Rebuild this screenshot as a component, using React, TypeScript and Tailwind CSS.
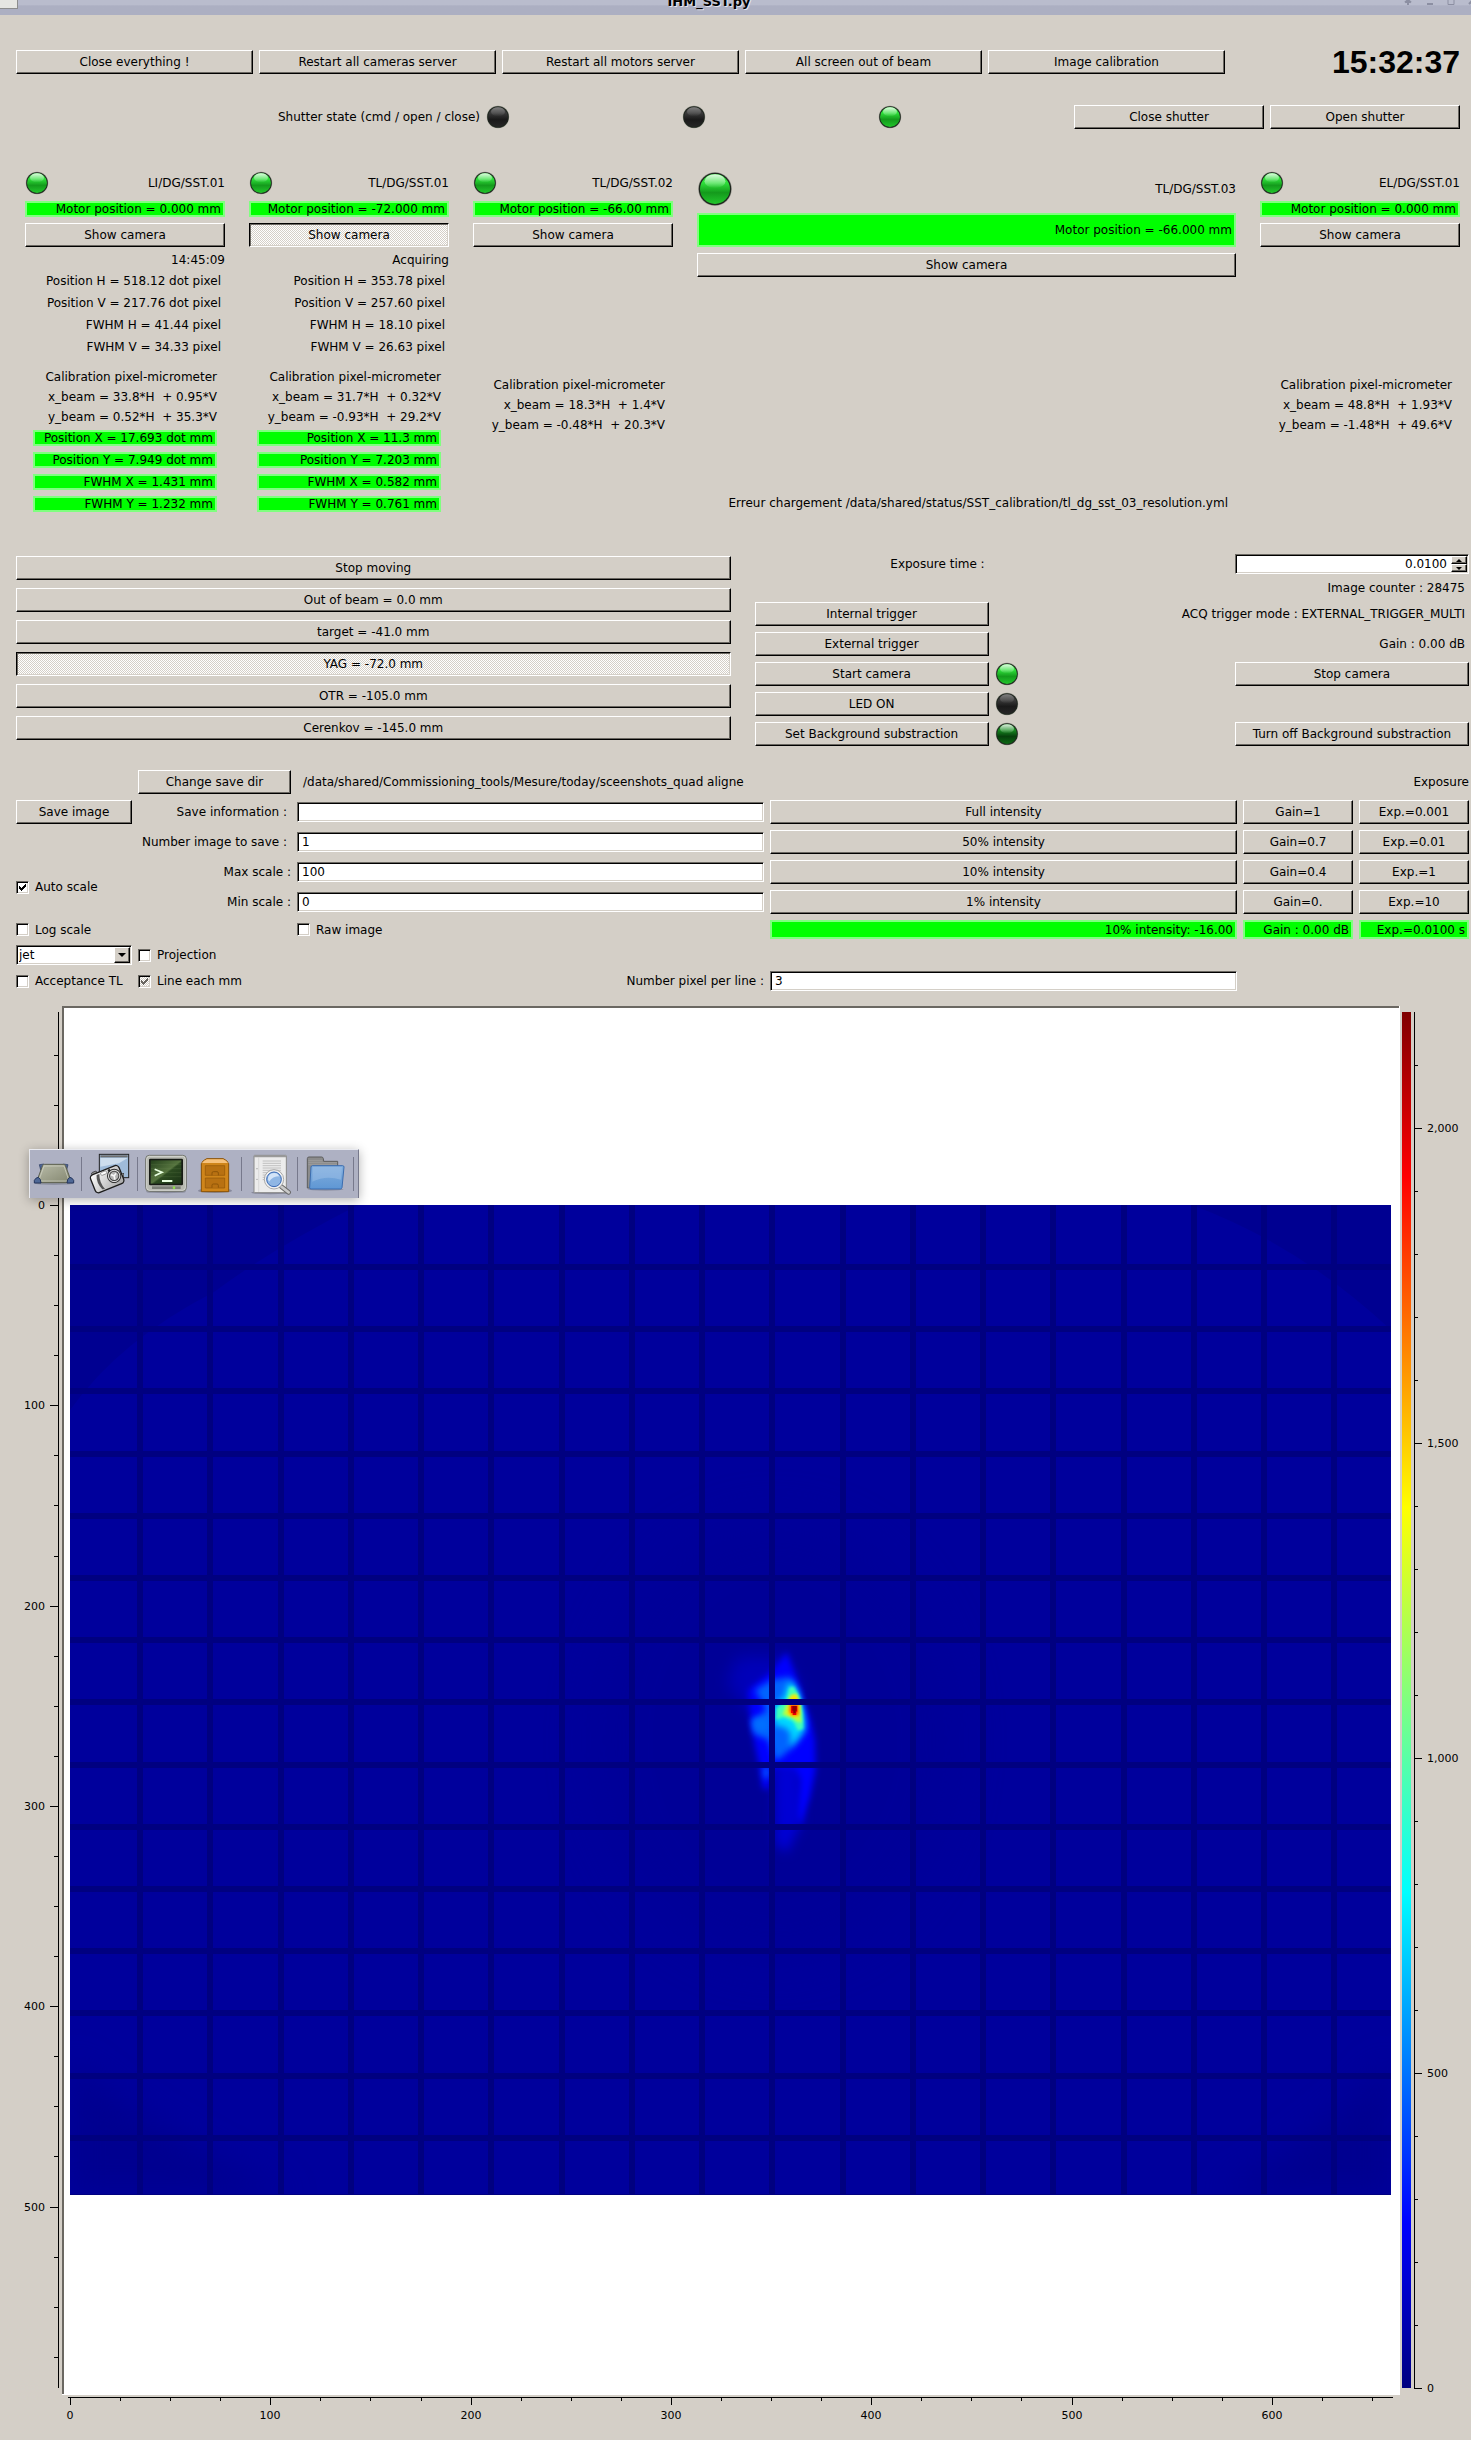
import { useState, type ReactNode } from "react"
import clsx from "clsx"

const raised =
  "border border-t-white border-l-white border-r-black border-b-black shadow-[inset_-1px_-1px_0_#6b6862] bg-[#d4cfc7]"
const pressed =
  "border border-t-black border-l-black border-r-white border-b-white shadow-[inset_1px_1px_0_#6b6862,inset_-1px_-1px_0_#d4cfc7] bg-[repeating-conic-gradient(#fff_0_25%,#d4cfc7_0_50%)] bg-[length:2px_2px]"
const sunken =
  "border border-t-[#6b6862] border-l-[#6b6862] border-r-white border-b-white shadow-[inset_1px_1px_0_#000,inset_-1px_-1px_0_#d4cfc7]"

function Button({
  children,
  active,
  className,
}: {
  children: ReactNode
  active?: boolean
  className?: string
}) {
  return (
    <button
      type="button"
      className={clsx("h-6 w-full leading-none", active ? pressed : raised, className)}
    >
      {children}
    </button>
  )
}

type LedColor = "on" | "off" | "dim"

const ledStops: Record<LedColor, string[]> = {
  on: ["#2ee03a", "#149a1c", "#22c62c"],
  off: ["#3a3a3a", "#1a1a1a", "#262626"],
  dim: ["#168a20", "#06400c", "#0c6a14"],
}

function Led({ color = "on", large }: { color?: LedColor; large?: boolean }) {
  const [top, mid, low] = ledStops[color]
  return (
    <svg viewBox="0 0 24 24" className={large ? "size-9 shrink-0" : "size-6 shrink-0"}>
      <defs>
        <linearGradient id={`body-${color}`} x1="0" y1="0" x2="0" y2="1">
          <stop offset="0.3" stopColor={top} />
          <stop offset="0.62" stopColor={mid} />
          <stop offset="1" stopColor={low} />
        </linearGradient>
        <linearGradient id={`shine-${color}`} x1="0" y1="0" x2="0" y2="1">
          <stop offset="0" stopColor="#fff" stopOpacity={color === "off" ? 0.35 : 0.85} />
          <stop offset="1" stopColor="#fff" stopOpacity="0" />
        </linearGradient>
      </defs>
      <circle cx="12" cy="12" r="11.2" fill="#1d251d" opacity="0.35" />
      <circle cx="12" cy="12" r="10.8" fill="#1d251d" />
      <circle cx="12" cy="12" r="10" fill={`url(#body-${color})`} />
      <ellipse cx="12" cy="6.8" rx="7" ry="4.6" fill={`url(#shine-${color})`} />
    </svg>
  )
}

function GreenBar({ children, className }: { children: ReactNode; className?: string }) {
  return (
    <div
      className={clsx(
        "flex items-center justify-end border-2 border-[#7fff7f] bg-[#00ff00] pr-0.5 leading-none whitespace-nowrap",
        className ?? "h-4"
      )}
    >
      {children}
    </div>
  )
}

function Calibration({ x, y, className }: { x: string; y: string; className?: string }) {
  return (
    <div className={clsx("pr-2 leading-5 whitespace-pre", className)}>
      <p>Calibration pixel-micrometer</p>
      <p>{x}</p>
      <p>{y}</p>
    </div>
  )
}

function Camera({
  name,
  motor,
  active,
  large,
  children,
}: {
  name: string
  motor: string
  active?: boolean
  large?: boolean
  children?: ReactNode
}) {
  return (
    <section className="flex flex-col text-right">
      <div className="mb-1.5 flex items-center justify-between">
        <Led large={large} />
        <h2>{name}</h2>
      </div>
      <GreenBar className={large ? "h-[34px]" : "h-4"}>Motor position = {motor} mm</GreenBar>
      <Button active={active} className="mt-1.5">
        Show camera
      </Button>
      {children}
    </section>
  )
}

function Measures({
  status,
  pixels,
  x,
  y,
  mm,
}: {
  status: string
  pixels: string[]
  x: string
  y: string
  mm: string[]
}) {
  return (
    <>
      <p className="mt-1.5 leading-[14px]">{status}</p>
      <div className="mt-1.5 flex flex-col gap-1.5 pr-1 leading-4">
        {pixels.map((line) => (
          <p key={line}>{line}</p>
        ))}
      </div>
      <Calibration x={x} y={y} className="mt-3" />
      <div className="mt-[3px] mr-2 ml-2 flex flex-col gap-1.5">
        {mm.map((line) => (
          <GreenBar key={line}>{line}</GreenBar>
        ))}
      </div>
    </>
  )
}

function Check({
  label,
  checked = false,
  partial,
  className,
}: {
  label: string
  checked?: boolean
  partial?: boolean
  className?: string
}) {
  const [on, setOn] = useState(checked)
  return (
    <label className={clsx("flex items-center gap-1.5 leading-none whitespace-nowrap", className)}>
      <span className="relative size-[13px] shrink-0">
        <input
          type="checkbox"
          checked={on}
          onChange={(e) => setOn(e.target.checked)}
          className={clsx(
            "block size-[13px] appearance-none",
            sunken,
            partial
              ? "bg-[repeating-conic-gradient(#fff_0_25%,#d4cfc7_0_50%)] bg-[length:2px_2px]"
              : "bg-white"
          )}
        />
        {on && (
          <svg viewBox="0 0 13 13" className="pointer-events-none absolute inset-0 size-[13px]">
            <path
              d="M3 5v3l2 2 5-5V2L5 7z"
              fill={partial ? "#6b6862" : "#000"}
              shapeRendering="crispEdges"
            />
          </svg>
        )}
      </span>
      {label}
    </label>
  )
}

function TextBox({ id, value, className }: { id: string; value: string; className?: string }) {
  return (
    <input
      id={id}
      type="text"
      defaultValue={value}
      className={clsx("h-5 w-full min-w-0 self-center bg-white px-1 outline-none", sunken, className)}
    />
  )
}

function Arrow({ up }: { up?: boolean }) {
  return (
    <svg viewBox="0 0 6 3" className="mx-auto h-[3px] w-[6px]">
      <path d={up ? "M0 3 3 0 6 3z" : "M0 0 3 3 6 0z"} />
    </svg>
  )
}

const motorButtons = [
  "Stop moving",
  "Out of beam = 0.0 mm",
  "target = -41.0 mm",
  "YAG = -72.0 mm",
  "OTR = -105.0 mm",
  "Cerenkov = -145.0 mm",
]

function ToolbarIcons() {
  const button = "block h-12 shrink-0"
  const separator = <span className="h-[34px] w-px shrink-0 self-center bg-[#77798c]" />
  return (
    <div className="absolute top-[158px] left-[29px] flex h-[49px] w-[330px] border-t border-r border-l border-t-[#e9eaf0] border-r-[#77798c] border-l-[#e9eaf0] bg-[#aeb1c3] shadow-[0_2px_10px_rgba(0,0,0,0.3)]">
      <button type="button" aria-label="Show desktop" className={button}>
        <svg viewBox="90 60 153 144" className="h-12 w-[51px]">
          <defs>
            <linearGradient id="desk" x1="0" y1="0" x2="1" y2="1">
              <stop offset="0" stopColor="#b9bca9" />
              <stop offset="1" stopColor="#83866f" />
            </linearGradient>
          </defs>
          <ellipse cx="162" cy="160" rx="58" ry="5" fill="#7c7f90" opacity="0.6" />
          <path d="M118 104l14-2 4 10-14 8zM204 104l-14-2-4 10 14 8z" fill="#4b6496" stroke="#2b3b5e" strokeWidth="2" />
          <path
            d="M128 106q2-3 6-3h56q4 0 6 3l17 46q1 6-5 6h-92q-6 0-5-6z"
            fill="url(#desk)"
            stroke="#5b5e4e"
            strokeWidth="3"
          />
          <path d="M132 108h60l15 45h-91z" fill="none" stroke="#d5d7c8" strokeWidth="2" />
          <path d="M103 159v-8q5-9 12-9 8 5 8 17zM221 159v-8q-5-9-12-9-8 5-8 17z" fill="#4f6896" stroke="#24355c" strokeWidth="3" />
        </svg>
      </button>
      {separator}
      <button type="button" aria-label="Screenshot" className={button}>
        <svg viewBox="246 60 165 144" className="h-12 w-[55px]">
          <defs>
            <linearGradient id="cam" x1="0" y1="0" x2="1" y2="1">
              <stop offset="0" stopColor="#fff" />
              <stop offset="1" stopColor="#a5a5a5" />
            </linearGradient>
          </defs>
          <rect x="298" y="73" width="88" height="70" fill="#9fbbd9" stroke="#222" strokeWidth="3" />
          <path d="M301 76h82v6h-82z" fill="#6e6e6e" />
          <path d="M301 84h82l-26 16-56 10z" fill="#cddded" />
          <rect x="363" y="130" width="8" height="14" fill="#ccc" stroke="#333" strokeWidth="2" />
          <g transform="rotate(-22 322 146)">
            <rect x="284" y="112" width="16" height="10" rx="3" fill="#999" stroke="#222" strokeWidth="2" />
            <rect x="275" y="118" width="92" height="58" rx="11" fill="url(#cam)" stroke="#1c1c1c" strokeWidth="4" />
            <path d="M296 124q-10 22 0 46l8 2q-9-24 1-48z" fill="#555" />
            <rect x="309" y="122" width="18" height="9" rx="3" fill="#fff" stroke="#777" strokeWidth="2" />
            <circle cx="344" cy="146" r="20" fill="#ddd" stroke="#333" strokeWidth="3" />
            <circle cx="344" cy="146" r="14" fill="#b4b4b4" stroke="#444" strokeWidth="3" />
            <path d="M337 139l7 7M344 146l8-5M344 146l-2 11" stroke="#f8f8f8" strokeWidth="5" />
            <circle cx="336" cy="125" r="4" fill="#222" />
          </g>
        </svg>
      </button>
      {separator}
      <button type="button" aria-label="Terminal" className={button}>
        <svg viewBox="414 60 165 144" className="h-12 w-[55px]">
          <defs>
            <linearGradient id="term" x1="0" y1="0" x2="1" y2="1">
              <stop offset="0" stopColor="#24401b" />
              <stop offset="0.5" stopColor="#56743f" />
              <stop offset="0.55" stopColor="#2c4a20" />
              <stop offset="1" stopColor="#1b3315" />
            </linearGradient>
          </defs>
          <ellipse cx="498" cy="185" rx="60" ry="5" fill="#7c7f90" opacity="0.7" />
          <rect x="437" y="76" width="122" height="108" rx="11" fill="#b8bab2" stroke="#6f726b" strokeWidth="3" />
          <rect x="440" y="79" width="116" height="102" rx="8" fill="none" stroke="#e3e4df" strokeWidth="2" />
          <rect x="447" y="86" width="102" height="80" rx="4" fill="#171b15" />
          <rect x="452" y="91" width="92" height="70" fill="url(#term)" />
          <path d="M453 104h91M453 116h91M453 128h91M453 140h91" stroke="#6f8c58" strokeWidth="1" opacity="0.6" />
          <path d="M464 118l22 9-22 10" fill="none" stroke="#e8ffe0" strokeWidth="5" />
          <path d="M486 153h31" stroke="#e8ffe0" strokeWidth="6" />
          <path d="M456 173h86" stroke="#7c7f77" strokeWidth="8" />
          <circle cx="522" cy="173" r="4" fill="#8fe04a" />
        </svg>
      </button>
      <button type="button" aria-label="File manager" className={button}>
        <svg viewBox="579 60 144 144" className="h-12 w-12">
          <ellipse cx="645" cy="182" rx="51" ry="7" fill="#77798c" opacity="0.7" />
          <path d="M604 185v-84q4-10 16-15h50q12 5 16 15v84z" fill="#cf851a" stroke="#8a5206" strokeWidth="3" />
          <path d="M606 99q5-8 15-11h48q10 3 15 11z" fill="#f6c27c" />
          <path d="M616 107h58v29h-58zM616 144h58v30h-58z" fill="#b87112" stroke="#8f5608" strokeWidth="2" />
          <path d="M636 136v-7q0-4 4-4h11q4 0 4 4v7M636 173v-7q0-4 4-4h11q4 0 4 4v7" fill="#b87112" stroke="#8f5608" strokeWidth="3" />
        </svg>
      </button>
      {separator}
      <button type="button" aria-label="Search files" className={button}>
        <svg viewBox="726 60 165 144" className="h-12 w-[55px]">
          <ellipse cx="812" cy="188" rx="58" ry="5" fill="#77798c" opacity="0.7" />
          <rect x="762" y="76" width="97" height="112" rx="2" fill="#ececec" stroke="#888" strokeWidth="3" />
          <path d="M762 77h97v5h-97z" fill="#9a9a9a" />
          <path d="M776 82v104" stroke="#cfcfcf" strokeWidth="2" />
          <path d="M788 93h55M788 100h55M788 107h55M788 114h55M788 121h55M788 128h55M788 135h55M788 142h55M788 149h55" stroke="#aaa" strokeWidth="2" />
          <circle cx="771" cy="116" r="2" fill="#999" />
          <circle cx="771" cy="148" r="2" fill="#999" />
          <path d="M844 170l22 17" stroke="#666" strokeWidth="14" strokeLinecap="round" />
          <path d="M844 170l22 17" stroke="#c9c9c9" strokeWidth="8" strokeLinecap="round" />
          <circle cx="822" cy="148" r="29" fill="#f1f1f1" stroke="#888" strokeWidth="2" />
          <circle cx="822" cy="148" r="22" fill="#8fb6e4" stroke="#3768b4" strokeWidth="3" />
          <path d="M804 148a18 18 0 0 1 34-9q-20 0-31 16z" fill="#d3e4f8" />
        </svg>
      </button>
      {separator}
      <button type="button" aria-label="Home folder" className={button}>
        <svg viewBox="894 60 165 144" className="h-12 w-[55px]">
          <defs>
            <linearGradient id="folder" x1="0" y1="0" x2="0" y2="1">
              <stop offset="0" stopColor="#82aede" />
              <stop offset="1" stopColor="#5f97d4" />
            </linearGradient>
          </defs>
          <ellipse cx="977" cy="178" rx="54" ry="4" fill="#77798c" opacity="0.6" />
          <path d="M922 174V86q0-5 5-5h38q4 0 5 5l1 8h42v80z" fill="#8c8c8c" stroke="#5d5d5d" strokeWidth="3" />
          <path d="M925 92h42M925 98h86M925 104h86" stroke="#a5a5a5" strokeWidth="2" />
          <path d="M937 107h91q4 0 4 4l-6 62q-1 4-5 4h-88q-4 0-4-4l4-62q1-4 4-4z" fill="url(#folder)" stroke="#3b6db0" strokeWidth="3" />
          <path d="M938 111h88l-3 38q-45-14-86 6z" fill="#a9c8ea" opacity="0.4" />
        </svg>
      </button>
      {separator}
    </div>
  )
}

const X0 = 70
const Y0 = 1205
const UNIT = 2.003

const xTicks = Array.from({ length: 27 }, (_, i) => i * 25)
const yTicks = Array.from({ length: 27 }, (_, i) => (i - 3) * 25)
const levelTicks = Array.from({ length: 22 }, (_, i) => i * 100)
const gridCols = Array.from({ length: 18 }, (_, i) => Math.round(137 + i * 70.25))
const gridRows = Array.from({ length: 15 }, (_, i) => Math.round(1264 + i * 62.2))

function Plot() {
  return (
    <svg viewBox="0 991 1471 1449" className="block h-auto w-full" fontSize="11">
      <defs>
        <linearGradient id="jet" x1="0" y1="1" x2="0" y2="0">
          <stop offset="0" stopColor="#000080" />
          <stop offset="0.12" stopColor="#0000ff" />
          <stop offset="0.36" stopColor="#00ffff" />
          <stop offset="0.64" stopColor="#ffff00" />
          <stop offset="0.88" stopColor="#ff0000" />
          <stop offset="1" stopColor="#800000" />
        </linearGradient>
        <filter id="soft" x="-50%" y="-50%" width="200%" height="200%">
          <feGaussianBlur stdDeviation="24" />
        </filter>
        <filter id="halo" x="-50%" y="-50%" width="200%" height="200%">
          <feGaussianBlur stdDeviation="16" />
        </filter>
        <filter id="glow" x="-50%" y="-50%" width="200%" height="200%">
          <feGaussianBlur stdDeviation="9" />
        </filter>
        <filter id="core" x="-50%" y="-50%" width="200%" height="200%">
          <feGaussianBlur stdDeviation="4" />
        </filter>
        <clipPath id="frame">
          <rect x="70" y="1205" width="1321" height="990" />
        </clipPath>
      </defs>

      {/* Canvas */}
      <rect x="62" y="1006" width="1338" height="1389" fill="#fff" />
      <path d="M63 2394V1007H1399" fill="none" stroke="#6b6862" strokeWidth="2" />

      {/* Camera image */}
      <g clipPath="url(#frame)">
        <rect x="70" y="1205" width="1321" height="990" fill="#00009c" />
        <path
          d="M70 1205H358Q270 1250 214 1292Q120 1340 70 1410zM1192 1205H1391V1330Q1300 1245 1192 1205z"
          fill="#000091"
        />
        <path
          d="M70 2195V2060Q150 2130 290 2195zM1391 2195V2060Q1330 2130 1220 2195z"
          fill="#000090"
          filter="url(#halo)"
        />
        <ellipse cx="775" cy="1740" rx="180" ry="220" fill="#000094" opacity="0.5" filter="url(#soft)" />

        {/* Beam spot, drawn on a grid three times finer than the plot */}
        <g transform="translate(640 1580) scale(0.3333)">
          <path d="M290 230H430L490 340 330 400 260 310z" fill="#0000c8" opacity="0.7" filter="url(#soft)" />
          <path d="M400 550H480L485 730 440 820 405 790z" fill="#0000d4" filter="url(#halo)" />
          <path
            d="M325 330L400 270 440 215 468 290 490 360 512 420 525 480 527 570 510 650 480 740 474 700 480 600 465 565 400 560 385 630 368 625 358 560 343 490 332 430z"
            fill="#0000ff"
            filter="url(#glow)"
          />
          <path
            d="M345 330L395 300 450 290 475 330 492 400 500 450 470 492 420 535 404 540 385 480 342 462 335 420 360 405 380 390z"
            fill="#0064ff"
            filter="url(#glow)"
          />
          <path d="M372 560h14v34h-14zM340 418h45v32h-40z" fill="#0070ff" filter="url(#glow)" />
          <path
            d="M441 318L455 304 475 340 487 390 494 430 488 455 468 480 450 500 452 460 435 442 404 436 404 375 432 350z"
            fill="#00d8ff"
            filter="url(#glow)"
          />
          <path d="M448 322L462 320 480 355 488 400 490 446 474 452 460 425 430 412 408 420 410 385 438 362z" fill="#40ffb8" filter="url(#core)" />
          <path d="M450 348L470 340 481 380 484 428 468 424 455 410 428 404 436 380z" fill="#b8ff40" filter="url(#core)" />
          <path d="M449 362L455 346 468 346 479 372 477 408 464 412 443 404z" fill="#ffe000" filter="url(#core)" />
          <path d="M450 372L474 368 476 404 456 406 448 394z" fill="#ff6000" filter="url(#core)" />
          <path d="M453 378h19v17h-3v10h-11v-6h-5z" fill="#f00000" />
          <path d="M457 378h13v14h-3v8h-7v-8h-3z" fill="#900000" />
        </g>

        {gridCols.map((x) => (
          <rect key={x} x={x} y="1205" width="6" height="990" fill="#000080" />
        ))}
        {gridRows.map((y) => (
          <rect key={y} x="70" y={y} width="1321" height="6" fill="#000080" />
        ))}
        <rect x="70" y="2194" width="1321" height="1" fill="#000080" />
      </g>

      {/* Axes */}
      <g stroke="#000" shapeRendering="crispEdges">
        <path d="M58.5 1012V2388M68 2397.5H1393M1414.5 1012V2388.5" />
        {yTicks.map((v) => {
          const y = Math.round(Y0 + v * UNIT) + 0.5
          return <path key={v} d={`M${v % 100 ? 54 : 50} ${y}H58`} />
        })}
        {xTicks.map((v) => {
          const x = Math.round(X0 + v * UNIT) + 0.5
          return <path key={v} d={`M${x} 2398V${v % 100 ? 2401 : 2405}`} />
        })}
        {levelTicks.map((v) => {
          const y = Math.round(2388 - v * 0.63) + 0.5
          return <path key={v} d={`M1415 ${y}H${v % 500 ? 1418 : 1422}`} />
        })}
      </g>
      {yTicks
        .filter((v) => v >= 0 && v % 100 === 0)
        .map((v) => (
          <text key={v} x="45" y={Math.round(Y0 + v * UNIT) + 4} textAnchor="end">
            {v}
          </text>
        ))}
      {xTicks
        .filter((v) => v % 100 === 0)
        .map((v) => (
          <text key={v} x={Math.round(X0 + v * UNIT)} y="2419" textAnchor="middle">
            {v}
          </text>
        ))}
      {levelTicks
        .filter((v) => v % 500 === 0)
        .map((v) => (
          <text key={v} x="1427" y={2392 - v * 0.63}>
            {v.toLocaleString("en-US")}
          </text>
        ))}

      <rect x="1402" y="1012" width="9" height="1376" fill="url(#jet)" />
    </svg>
  )
}

export default function App() {
  return (
    <div className="bg-[#d4cfc7] font-['DejaVu_Sans',sans-serif] text-xs text-black">
      {/* Title bar */}
      <header className="flex h-[15px] overflow-hidden bg-linear-to-b from-[#b9bccd] from-30% to-[#acafc2] to-40%">
        <div className="h-[9px] w-[18px] border-r border-b border-[#8d8d8d] bg-[#e6e6e2]" />
        <h1 className="-mt-1.5 flex-1 text-center text-[13px] leading-4 font-bold [text-shadow:1px_1px_0_#e4e5ee]">
          IHM_SST.py
        </h1>
        <svg viewBox="0 0 71 15" className="h-[15px] w-[71px]" fill="none" stroke="#8c8fa2">
          <path d="M8 5V0M5 2.5l3-2.500 3 2.500" strokeWidth="2" />
          <path d="M27 4h6" strokeWidth="2" />
          <path d="M48 0v4.500h6V0" />
          <path d="M69 4l3-3" strokeWidth="2" />
        </svg>
      </header>

      {/* General commands */}
      <div className="mt-[35px] grid grid-cols-[repeat(5,237fr)_229fr] items-center gap-1.5 pr-[11px] pl-4">
        <Button>Close everything !</Button>
        <Button>Restart all cameras server</Button>
        <Button>Restart all motors server</Button>
        <Button>All screen out of beam</Button>
        <Button>Image calibration</Button>
        <time className="text-right font-['Liberation_Sans',sans-serif] text-[32px] leading-6 font-bold">
          15:32:37
        </time>
      </div>

      {/* Shutter */}
      <div className="mt-[31px] grid grid-cols-[464fr_repeat(5,190fr)] items-center gap-1.5 pr-[11px] pl-4">
        <p className="text-right">Shutter state (cmd / open / close)</p>
        <Led color="off" />
        <Led color="off" />
        <Led />
        <Button>Close shutter</Button>
        <Button>Open shutter</Button>
      </div>

      {/* Cameras */}
      <div className="mt-[42px] grid grid-cols-[200fr_200fr_200fr_539fr_200fr] gap-6 pr-[11px] pl-[25px]">
        <Camera name="LI/DG/SST.01" motor="0.000">
          <Measures
            status="14:45:09"
            pixels={[
              "Position H = 518.12 dot pixel",
              "Position V = 217.76 dot pixel",
              "FWHM H = 41.44 pixel",
              "FWHM V = 34.33 pixel",
            ]}
            x="x_beam = 33.8*H  + 0.95*V"
            y="y_beam = 0.52*H  + 35.3*V"
            mm={[
              "Position X = 17.693 dot mm",
              "Position Y = 7.949 dot mm",
              "FWHM X = 1.431 mm",
              "FWHM Y = 1.232 mm",
            ]}
          />
        </Camera>
        <Camera name="TL/DG/SST.01" motor="-72.000" active>
          <Measures
            status="Acquiring"
            pixels={[
              "Position H = 353.78 pixel",
              "Position V = 257.60 pixel",
              "FWHM H = 18.10 pixel",
              "FWHM V = 26.63 pixel",
            ]}
            x="x_beam = 31.7*H  + 0.32*V"
            y="y_beam = -0.93*H  + 29.2*V"
            mm={[
              "Position X = 11.3 mm",
              "Position Y = 7.203 mm",
              "FWHM X = 0.582 mm",
              "FWHM Y = 0.761 mm",
            ]}
          />
        </Camera>
        <Camera name="TL/DG/SST.02" motor="-66.00">
          <Calibration
            x="x_beam = 18.3*H  + 1.4*V"
            y="y_beam = -0.48*H  + 20.3*V"
            className="mt-32"
          />
        </Camera>
        <Camera name="TL/DG/SST.03" motor="-66.000" large>
          <p className="mt-auto pr-2 leading-[18px]">
            Erreur chargement /data/shared/status/SST_calibration/tl_dg_sst_03_resolution.yml
          </p>
        </Camera>
        <Camera name="EL/DG/SST.01" motor="0.000">
          <Calibration
            x="x_beam = 48.8*H  + 1.93*V"
            y="y_beam = -1.48*H  + 49.6*V"
            className="mt-32"
          />
        </Camera>
      </div>

      <div className="mt-[42px] grid grid-cols-2 gap-6 pr-0.5 pl-4">
        {/* Screen positions */}
        <div className="flex flex-col gap-2 pt-0.5">
          {motorButtons.map((label) => (
            <Button key={label} active={label.startsWith("YAG")}>
              {label}
            </Button>
          ))}
        </div>

        {/* Acquisition */}
        <div className="grid grid-cols-3 grid-rows-[20px_16px_repeat(5,24px)] items-center gap-1.5">
          <label htmlFor="exposure" className="pr-1 text-right">
            Exposure time :
          </label>
          <div className={clsx("col-start-3 flex h-5 bg-white p-px", sunken)}>
            <input
              id="exposure"
              type="text"
              defaultValue="0.0100"
              className="w-full min-w-0 pr-1 text-right outline-none"
            />
            <div className="flex w-4 shrink-0 flex-col">
              <button type="button" aria-label="Increase" className={clsx("h-2 w-4", raised)}>
                <Arrow up />
              </button>
              <button type="button" aria-label="Decrease" className={clsx("h-2 w-4", raised)}>
                <Arrow />
              </button>
            </div>
          </div>

          <p className="col-start-3 pr-1 text-right">Image counter : 28475</p>

          <Button className="col-start-1">Internal trigger</Button>
          <p className="col-span-2 pr-1 text-right">ACQ trigger mode : EXTERNAL_TRIGGER_MULTI</p>

          <Button>External trigger</Button>
          <p className="col-start-3 pr-1 text-right">Gain : 0.00 dB</p>

          <Button className="col-start-1">Start camera</Button>
          <Led />
          <Button>Stop camera</Button>

          <Button className="col-start-1">LED ON</Button>
          <Led color="off" />

          <Button className="col-start-1">Set Background substraction</Button>
          <Led color="dim" />
          <Button>Turn off Background substraction</Button>
        </div>
      </div>

      {/* Saving, scale and presets */}
      <div className="mt-6 grid grid-cols-[116fr_153fr_467fr_467fr_110fr_110fr] grid-rows-[repeat(5,24px)_19px_20px_20px] items-center gap-1.5 pr-0.5 pl-4">
        <Button className="col-start-2 row-start-1">Change save dir</Button>
        <p className="col-start-3 row-start-1 pl-1.5 whitespace-nowrap">
          /data/shared/Commissioning_tools/Mesure/today/sceenshots_quad aligne
        </p>
        <p className="col-start-6 row-start-1 text-right">Exposure</p>

        <Button className="col-start-1 row-start-2">Save image</Button>
        <label htmlFor="info" className="col-start-2 row-start-2 pr-1 text-right whitespace-nowrap">
          Save information :
        </label>
        <TextBox id="info" value="" className="col-start-3 row-start-2" />
        <Button className="col-start-4 row-start-2">Full intensity</Button>
        <Button className="col-start-5 row-start-2">Gain=1</Button>
        <Button className="col-start-6 row-start-2">Exp.=0.001</Button>

        <label htmlFor="count" className="col-start-2 row-start-3 pr-1 text-right whitespace-nowrap">
          Number image to save :
        </label>
        <TextBox id="count" value="1" className="col-start-3 row-start-3" />
        <Button className="col-start-4 row-start-3">50% intensity</Button>
        <Button className="col-start-5 row-start-3">Gain=0.7</Button>
        <Button className="col-start-6 row-start-3">Exp.=0.01</Button>

        <Check label="Auto scale" checked className="col-start-1 row-span-2 row-start-4" />
        <label htmlFor="max" className="col-start-2 row-start-4 text-right">
          Max scale :
        </label>
        <TextBox id="max" value="100" className="col-start-3 row-start-4" />
        <Button className="col-start-4 row-start-4">10% intensity</Button>
        <Button className="col-start-5 row-start-4">Gain=0.4</Button>
        <Button className="col-start-6 row-start-4">Exp.=1</Button>

        <label htmlFor="min" className="col-start-2 row-start-5 text-right">
          Min scale :
        </label>
        <TextBox id="min" value="0" className="col-start-3 row-start-5" />
        <Button className="col-start-4 row-start-5">1% intensity</Button>
        <Button className="col-start-5 row-start-5">Gain=0.</Button>
        <Button className="col-start-6 row-start-5">Exp.=10</Button>

        <Check label="Log scale" className="col-start-1 row-start-6" />
        <Check label="Raw image" className="col-start-3 row-start-6" />
        <GreenBar className="col-start-4 row-start-6 h-[19px]">10% intensity: -16.00</GreenBar>
        <GreenBar className="col-start-5 row-start-6 h-[19px]">Gain : 0.00 dB</GreenBar>
        <GreenBar className="col-start-6 row-start-6 h-[19px]">Exp.=0.0100 s</GreenBar>

        <div className="relative col-start-1 row-start-7">
          <select
            aria-label="Colour map"
            className={clsx("block h-5 w-full appearance-none bg-white pl-0.5 outline-none", sunken)}
          >
            <option>jet</option>
          </select>
          <span
            className={clsx(
              "pointer-events-none absolute top-0.5 right-0.5 flex h-4 w-4 items-center",
              raised
            )}
          >
            <svg viewBox="0 0 8 4" className="mx-auto h-1 w-2">
              <path d="M0 0 4 4 8 0z" />
            </svg>
          </span>
        </div>
        <Check label="Projection" className="col-start-2 row-start-7" />

        <Check label="Acceptance TL" className="col-start-1 row-start-8" />
        <Check label="Line each mm" checked partial className="col-start-2 row-start-8" />
        <label htmlFor="pixels" className="col-start-3 row-start-8 text-right">
          Number pixel per line :
        </label>
        <TextBox id="pixels" value="3" className="col-start-4 row-start-8" />
      </div>

      <main className="relative">
        <Plot />
        <ToolbarIcons />
      </main>
    </div>
  )
}
